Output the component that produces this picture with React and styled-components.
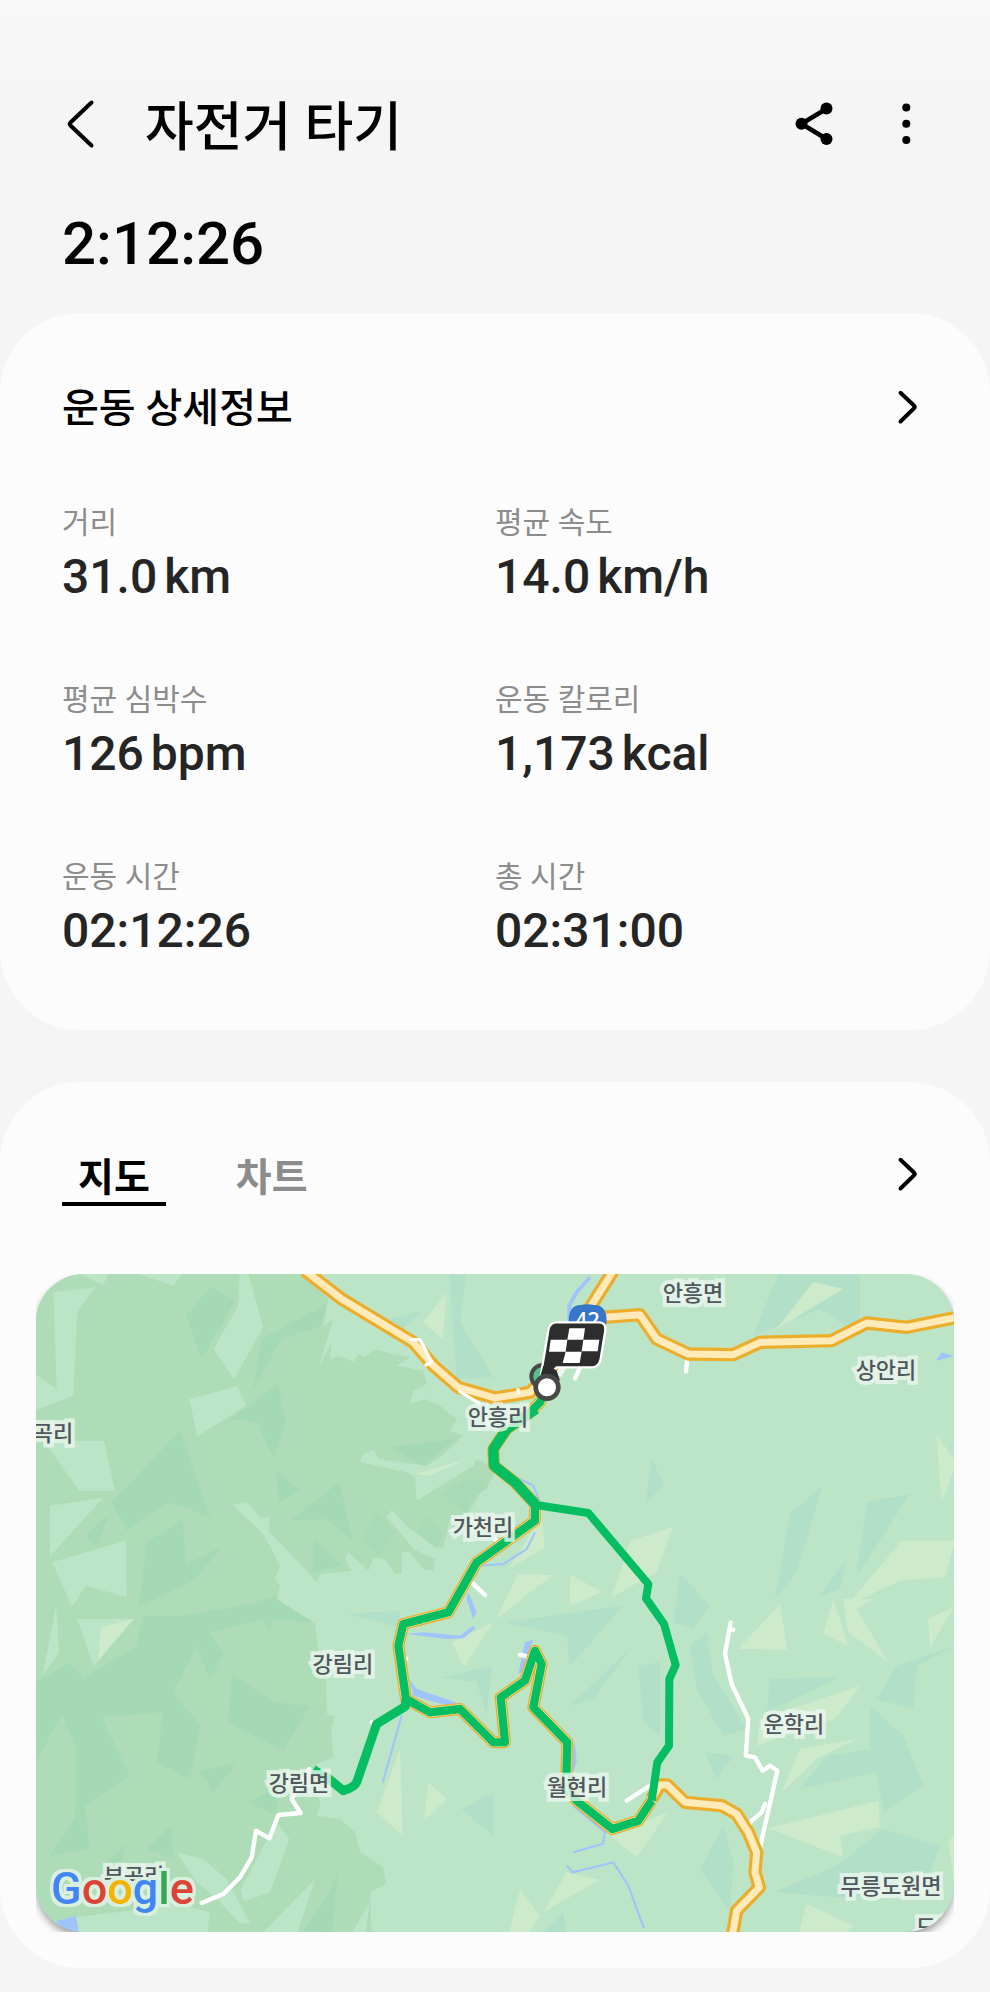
import React, { useState } from 'react';
import styled, { createGlobalStyle } from 'styled-components';

const GlobalStyle = createGlobalStyle`
  * { box-sizing: border-box; }
  body {
    margin: 0;
    background: #f5f5f5;
    color: #000;
    font-family: Roboto, "Noto Sans CJK KR", sans-serif;
  }
  button {
    margin: 0;
    padding: 0;
    border: 0;
    background: none;
    color: inherit;
    font: inherit;
    cursor: pointer;
  }
`;

const Page = styled.div`
  min-height: 100vh;
  padding: 92px 0 24px;
  background: linear-gradient(#f8f8f8, #f5f5f5 120px);
`;

const Header = styled.header`
  display: flex;
  align-items: center;
  height: 64px;
  padding: 0 60px 0 58px;
`;

const Title = styled.h1`
  flex: 1;
  margin: 0 0 0 39px;
  padding-top: 8px;
  font-size: 53px;
  line-height: 64px;
  font-weight: 500;
`;

const HeaderActions = styled.div`
  display: flex;
  gap: 44px;
`;

const IconButton = styled.button`
  display: flex;
  align-items: center;
  justify-content: center;
  width: 48px;
  height: 56px;
  flex: none;
`;

const Duration = styled.p`
  margin: 52px 62px 33px;
  font-size: 60px;
  line-height: 72px;
  font-weight: 500;
`;

const Cards = styled.main`
  display: flex;
  flex-direction: column;
  gap: 52px;
`;

const Card = styled.section`
  border-radius: 80px;
  background: #fcfcfc;
  padding: ${(p) => (p.$media ? '64px 36px 36px' : '68px 0 71px')};
`;

const CardHeader = styled.div`
  display: flex;
  align-items: center;
  justify-content: space-between;
  padding: ${(p) => (p.$media ? '0 24px 0 26px' : '0 60px 0 62px')};
`;

const CardTitle = styled.h2`
  margin: 0;
  font-size: 40px;
  line-height: 56px;
  font-weight: 500;
`;

const Stats = styled.dl`
  display: grid;
  grid-template-columns: 1fr 1fr;
  row-gap: 73px;
  margin: 64px 62px 0;
`;

const StatLabel = styled.dt`
  color: #8c8c8c;
  font-size: 30px;
  line-height: 44px;
`;

const StatValue = styled.dd`
  display: flex;
  gap: 7px;
  margin: 4px 0 0;
  color: #252525;
  font-size: 48px;
  line-height: 56px;
  font-weight: 500;
`;

const Tabs = styled.div`
  display: flex;
  gap: 54px;
`;

const Tab = styled.button`
  padding: 8px 16px 0;
  border-bottom: 4px solid ${(p) => (p.$active ? '#000' : 'transparent')};
  color: ${(p) => (p.$active ? '#000' : '#8c8c8c')};
  font-size: 39px;
  line-height: 48px;
  font-weight: 700;
`;

const MapFrame = styled.div`
  margin-top: 68px;
  overflow: hidden;
`;

const MapCanvas = styled.div`
  position: relative;
  aspect-ratio: 918 / 658;
  overflow: hidden;
  border-radius: 48px;
  background: #bce4c7;
  box-shadow: 0 5px 8px -1px rgba(0, 0, 0, 0.4);
`;

const MapDrawing = styled.svg`
  display: block;
  width: 100%;
  height: 100%;
`;

const PlaceName = styled.span`
  position: absolute;
  left: ${(p) => (p.$x / 918) * 100}%;
  top: ${(p) => (p.$y / 658) * 100}%;
  transform: translate(-50%, -50%);
  color: #50565a;
  font-size: 22px;
  line-height: 28px;
  font-weight: 500;
  white-space: nowrap;
  -webkit-text-stroke: 8px rgba(235, 247, 239, 0.8);
  paint-order: stroke fill;
`;

const MapBrand = styled.a`
  position: absolute;
  left: 15px;
  bottom: 15px;
  font-family: Roboto, sans-serif;
  font-size: 45px;
  line-height: 56px;
  font-weight: 500;
  text-decoration: none;
  filter: drop-shadow(3px 0 0 #d9efdf) drop-shadow(-3px 0 0 #d9efdf)
    drop-shadow(0 3px 0 #d9efdf) drop-shadow(0 -3px 0 #d9efdf);
`;

const BrandLetter = styled.span`
  color: ${(p) => p.$color};
`;

const stats = [
  ['거리', '31.0', 'km'],
  ['평균 속도', '14.0', 'km/h'],
  ['평균 심박수', '126', 'bpm'],
  ['운동 칼로리', '1,173', 'kcal'],
  ['운동 시간', '02:12:26'],
  ['총 시간', '02:31:00'],
];

const places = [
  ['안흥면', 657, 20],
  ['상안리', 850, 97],
  ['안흥리', 462, 144],
  ['곡리', 17, 160],
  ['가천리', 447, 254],
  ['강림리', 307, 391],
  ['운학리', 758, 451],
  ['강림면', 263, 510],
  ['월현리', 541, 514],
  ['부곡리', 98, 603],
  ['무릉도원면', 855, 613],
  ['도원리', 910, 654],
];

const brand = [
  ['G', '#4285f4'],
  ['o', '#db4437'],
  ['o', '#f4b400'],
  ['g', '#4285f4'],
  ['l', '#3aa757'],
  ['e', '#db4437'],
];

function BackIcon() {
  return (
    <svg width="48" height="56" viewBox="0 0 48 56" fill="none" stroke="#000" strokeWidth="4" strokeLinecap="round" strokeLinejoin="round" aria-hidden="true">
      <path d="M33.500 6.500 L12.500 26.500 Q11 28 12.500 29.500 L33.500 49.500" />
    </svg>
  );
}

function ShareIcon() {
  return (
    <svg width="48" height="56" viewBox="0 0 48 56" stroke="#000" aria-hidden="true">
      <path d="M36.500 12.700 L11.500 27.800 L36.500 43" fill="none" strokeWidth="4.600" />
      <g stroke="none">
        <circle cx="11.500" cy="27.800" r="6" />
        <circle cx="36.500" cy="12.600" r="6" />
        <circle cx="36.500" cy="43" r="6" />
      </g>
    </svg>
  );
}

function MoreIcon() {
  return (
    <svg width="48" height="56" viewBox="0 0 48 56" aria-hidden="true">
      <circle cx="24.300" cy="11.500" r="4" />
      <circle cx="24.300" cy="27.700" r="4" />
      <circle cx="24.300" cy="44" r="4" />
    </svg>
  );
}

function ChevronIcon() {
  return (
    <svg width="48" height="56" viewBox="0 0 48 56" fill="none" stroke="#000" strokeWidth="4" strokeLinecap="round" strokeLinejoin="round" aria-hidden="true">
      <path d="M18.500 11.800 L32.200 24.800 Q33.400 26 32.200 27.200 L18.500 40.500" />
    </svg>
  );
}

const northLoop =
  'M1550 355 L1530 400 L1500 430 L1430 480 L1390 540 L1392 590 L1455 640 L1515 705 L1515 755 L1340 880 L1255 1030 L1120 1065 L1105 1130 L1128 1290 L1200 1330 L1290 1320 L1390 1420 L1425 1420 L1412 1285 L1485 1235 L1515 1145 L1535 1185 L1510 1315 L1612 1420 L1608 1560 L1640 1595 L1747 1680 L1825 1655 L1865 1595';
const eastLoop =
  'M1865 1595 L1882 1480 L1917 1430 L1918 1230 L1937 1188 L1902 1065 L1848 988 L1855 945 L1675 732 L1518 708';
const spur = 'M1128 1290 L1126 1312 L1040 1365 L980 1540 Q972 1556 940 1565 L900 1532 L850 1502';
const highways = [
  'M825 5 L935 90 L1150 220 L1210 290 L1285 355 L1395 387 L1500 370 L1550 320 L1690 100 L1750 5',
  'M1650 150 L1830 137 L1880 210 L1975 255 L2110 257 L2190 220 L2405 215 L2510 162 L2630 175 L2790 143',
  'M1865 1590 L1890 1548 L1912 1548 L1965 1600 L2075 1610 L2120 1635 L2155 1690 L2180 1750 L2175 1810 L2188 1855 L2120 1925 L2105 2010',
];

function Terrain() {
  return (
    <g>
      <path
        fill="#addcb6"
        d="M0 0 H820 L895 90 L880 170 L910 150 L865 298 L905 220 L900 270 L925 262 L970 278 L985 255 L1005 265 L1035 240 L1085 255 L1140 265 L1100 290 L1180 305 L1190 345 L1150 365 L1140 405 L1185 390 L1230 410 L1282 452 L1258 485 L1300 500 L1235 560 L1190 590 L1045 570 L1030 540 L1000 555 L990 580 L1130 610 L1155 625 L1160 695 L1330 590 L1340 570 L1400 600 L1370 660 L1320 690 L1310 740 L1260 750 L1240 835 L1220 835 L1140 780 L1085 722 L1070 745 L1110 790 L1150 840 L1215 870 L1210 905 L1180 900 L1140 850 L1115 850 L1115 915 L1095 915 L1065 870 L1030 865 L1015 905 L955 850 L945 870 L965 905 L870 915 L860 940 L825 900 L715 785 L720 740 L695 750 L650 698 L608 708 L700 795 L750 890 L735 930 L750 950 L740 990 L800 1030 L855 1065 L865 1145 L888 1180 L890 1335 L915 1342 L903 1380 L910 1465 L860 1485 L855 1560 L872 1600 L860 1640 L930 1650 L975 1690 L990 1750 L1060 1795 L1068 1845 L1020 1870 L1025 2010 H0 Z"
      />
      <g fill="#bce4c7">
        <path d="M70 70 L195 55 L142 130 L130 380 L18 422 L18 315 L80 362 Z M148 15 H235 L220 48 Z M325 15 H455 L430 50 Z M628 15 H655 L700 175 L612 330 L550 240 L625 110 Z M478 390 L622 352 L648 410 L502 502 Z M40 515 L222 515 L255 665 H148 Z M60 710 L220 686 L60 862 Z M66 880 L288 815 L290 985 L168 950 L125 1010 Z" />
        <path d="M78 1010 L88 1150 L38 1218 Z M142 1050 H312 L190 1192 Z M112 990 H145 L125 1012 Z M740 1660 L778 1710 L720 1870 L640 1898 L632 1860 Z M855 1830 L800 2000 L700 1990 Z M1020 1900 L1005 2000 H960 Z M440 1750 L520 1770 L590 1830 L630 1905 L660 1962 L630 1965 L570 1900 L500 1840 Z M130 1945 L300 1925 L420 1900 L540 1930 L530 2010 H100 Z" />
      </g>
      <g fill="#a5d9b5">
        <path d="M545 52 L615 95 L515 270 L468 140 Z M745 345 L768 465 L730 570 L680 460 L600 450 Z M695 210 L890 105 L870 175 L755 208 L665 370 Z M450 485 L540 745 L420 700 L290 785 L245 700 Z M740 605 L810 665 L745 702 Z M928 640 L970 820 L890 750 L785 752 Z M850 810 L935 890 L848 910 Z M1080 535 L1275 510 L1180 590 Z M240 735 L200 830 L165 800 Z M458 750 L470 885 L580 830 L490 935 L325 1015 L350 820 Z" />
        <path d="M18 1240 L120 1180 L160 1230 L320 1130 L340 1040 L460 1040 L740 990 L850 1060 L700 1050 L540 1090 L580 1155 L540 1235 L500 1130 L430 1270 L510 1370 L480 1530 L380 1480 L400 1330 L215 1345 L300 1520 L165 1610 L180 1740 L60 1760 L135 1650 L140 1440 L95 1335 L18 1480 Z M605 1215 L730 1300 L840 1310 L760 1445 L595 1360 Z M510 1505 L620 1480 L550 1572 Z M425 1668 L430 1770 L350 1740 Z M740 1555 L740 1640 L650 1600 Z M925 1800 L905 2000 H810 L900 1870 Z M680 1000 L740 980 L720 1100 Z M290 1725 L270 1790 H215 Z" />
        <path d="M1300 630 L1370 640 L1310 740 L1240 680 Z M1040 725 L1090 790 L1050 860 L995 820 Z M1190 740 L1240 790 L1220 840 L1160 790 Z" opacity="0.7" />
      </g>
      <g fill="#b1dfc8">
        <path d="M1258 15 H1310 L1290 160 L1390 325 L1280 330 Z M1175 125 L1110 190 L1040 160 Z M2245 15 H2490 V200 L2370 120 L2170 200 Z M1865 565 L1900 650 L1848 700 Z M2378 650 L2300 910 L2235 990 L2280 735 Z M2510 700 L2640 675 L2480 920 Z M2450 870 L2430 960 L2370 980 Z M1950 915 L2040 1010 L1990 1080 L1930 1060 Z" />
        <path d="M1420 1060 L1780 1010 L1620 1190 L1610 1100 Z M1825 1190 L1890 1180 V1400 L1840 1360 Z M1980 1130 L2030 1090 L2050 1220 L2150 1380 L2080 1400 L2000 1260 Z M2220 1230 L2430 1225 L2210 1330 Z M2780 1130 L2660 1190 L2650 1320 L2540 1290 L2600 1190 Z M2520 1310 L2620 1400 L2680 1550 L2560 1630 L2540 1510 L2310 1560 L2390 1460 L2520 1440 Z M2080 1670 L2110 1780 L2100 1930 L2010 1800 Z M2560 1680 L2730 1730 L2700 1810 L2500 1890 L2230 1870 L2420 1790 Z M2025 1450 L2110 1460 L2060 1530 Z M1385 1190 L1370 1340 L1340 1240 L1235 1225 Z M1390 1570 L1390 1700 L1295 1620 Z M1800 1140 L1620 1310 L1690 1290 Z M1600 1930 L1610 2000 H1530 Z M950 1035 L1110 1025 L1105 1075 Z" />
      </g>
      <g fill="#cdeacb">
        <path d="M1250 70 L1238 210 L1178 160 Z M2350 38 L2440 60 L2240 180 Z M2718 495 L2780 580 L2735 700 Z M1928 775 L1880 910 L1745 985 L1800 815 Z M2615 815 H2775 L2745 925 L2610 935 L2450 1010 Z M1620 915 L1715 970 L1620 1010 Z M1465 915 L1570 918 L1400 1045 Z M1535 740 L1545 835 L1435 900 Z M1155 615 L1310 570 L1200 620 Z" />
        <path d="M2250 1005 L2272 1142 L2125 1140 Z M2410 990 L2455 1130 L2380 1095 Z M2440 990 H2530 L2480 1020 L2575 1180 L2455 1090 Z M2775 1010 L2700 1135 L2695 1050 Z M2490 1250 L2415 1350 L2180 1430 L2190 1350 Z M2480 1410 L2360 1470 L2255 1570 L2310 1440 Z M2545 1595 L2550 1675 L2430 1700 L2440 1765 L2215 1678 Z M1915 1628 L1820 1765 L1740 1700 Z M1470 1862 L1530 1940 L1490 2000 H1435 Z M1610 1810 L1708 1832 L1540 1930 Z M2330 1905 L2470 1970 L2440 2000 H2305 Z M2755 1720 L2775 1690 V1860 Z M1390 1060 L1302 1195 L1265 1120 Z M1110 1440 L1118 1700 L1040 1630 Z M1195 1540 L1250 1590 L1182 1655 Z M310 1050 L205 1175 L212 1075 Z M1430 990 H1480 L1400 1050 Z" />
      </g>
      <g fill="#9fc3fb">
        <path d="M1130 1095 L1180 1090 L1290 1100 L1330 1070 L1335 1080 L1300 1108 L1250 1110 Z M1315 970 L1340 1030 L1330 1050 L1310 990 Z M1138 1230 L1160 1260 L1290 1305 L1270 1315 L1150 1280 Z M80 1955 L138 1942 L148 2000 H100 Z M2718 275 L2735 250 L2772 262 Z M1635 1420 L1640 1480 L1625 1520 L1612 1500 Z M1485 1120 L1510 1112 L1500 1135 L1475 1210 L1465 1215 Z" />
      </g>
      <g fill="none" stroke="#9fc3fb" strokeWidth="6">
        <path d="M1680 25 L1640 70 L1618 110 V160" strokeWidth="11" />
        <path d="M1115 1340 L1058 1540 M1470 630 L1510 650 L1530 700 M1515 790 L1490 840 L1420 885 L1340 890 M1630 1610 L1725 1690 L1718 1725 L1630 1750 M1610 1790 L1628 1810 L1750 1780 L1795 1850 L1842 1978" />
      </g>
    </g>
  );
}

function RouteMap() {
  return (
    <MapDrawing viewBox="18 15 2754 1974" preserveAspectRatio="xMidYMid slice" role="img" aria-label="자전거 경로 지도">
      <Terrain />
      <g fill="none" strokeLinejoin="round">
        <g stroke="#fff" strokeWidth="13" strokeLinecap="round">
          <path d="M515 1902 L580 1875 L630 1825 L665 1765 L678 1685 L718 1708 L745 1638 L812 1632 L785 1590 L838 1500" />
          <path d="M2102 1060 L2085 1155 L2105 1245 L2155 1350 L2147 1460 L2175 1465 L2198 1505 L2220 1490 L2242 1505 L2180 1780 M2205 1605 L2195 1630 L2162 1658 L2150 1690 M2104 1082 H2110" />
          <path d="M1790 1595 L1860 1550 M1972 265 L1968 308 M1635 328 L1655 285 M1325 940 L1365 978 M1470 1157 L1500 1165 M1025 1360 H1026 M1128 1170 H1129 M1395 810 L1405 825" />
        </g>
        <g strokeLinecap="butt">
          {highways.map((d) => (
            <path key={d} d={d} stroke="#ecae2a" strokeWidth="40" />
          ))}
          {highways.map((d) => (
            <path key={d} d={d} stroke="#ffeab9" strokeWidth="21" />
          ))}
        </g>
        <path d="M1145 212 L1170 212 L1205 280 L1188 288 M1290 368 L1350 405 M1464 362 L1466 372" stroke="#fff" strokeWidth="10" strokeLinecap="round" />
        <path d={northLoop} stroke="#ecae2a" strokeWidth="36" />
        <path d={northLoop} stroke="#ffeab9" strokeWidth="28" />
        <path d={northLoop} stroke="#06be62" strokeWidth="25" />
        <path d="M1518 420 L1430 480 L1390 540 L1392 590 L1455 640 L1515 705" stroke="#06be62" strokeWidth="31" />
        <path d={eastLoop} stroke="#06be62" strokeWidth="24" />
        <path d={spur} stroke="#06be62" strokeWidth="27" />
      </g>
      <g>
        <path d="M1616 156 Q1616 108 1652 108 Q1672 103 1693 108 Q1730 108 1730 156 Q1725 200 1672 210 Q1620 200 1616 156 Z" fill="#3876c9" />
        <text x="1672" y="176" fill="#fff" fontSize="66" fontWeight="500" textAnchor="middle" fontFamily="Noto Sans, sans-serif">42</text>
        <path d="M1585 320 L1602 290" stroke="#eef7ee" strokeWidth="20" />
        <circle cx="1538" cy="322" r="34" fill="#57c08d" stroke="#484848" strokeWidth="12" />
        <path
          d="M1578 160 H1708 Q1728 161 1726 184 L1712 270 Q1707 295 1686 295 H1580 L1545 328 Q1532 334 1533 316 L1555 184 Q1558 161 1578 160 Z"
          fill="#2d2d2d"
          stroke="#fff"
          strokeWidth="7"
        />
        <path d="M1560 290 L1580 305 L1590 335 L1530 325 L1540 290 Z" fill="#2d2d2d" />
        <g fill="#fff">
          <path d="M1618 178 H1665 L1660 212 H1612 Z M1562 212 H1612 L1607 248 H1557 Z M1660 212 H1708 L1703 247 H1655 Z M1607 248 H1655 L1649 282 H1598 Z" />
        </g>
        <circle cx="1551" cy="355" r="34" fill="#fff" stroke="#484848" strokeWidth="14" />
      </g>
    </MapDrawing>
  );
}

export default function App() {
  const [tab, setTab] = useState('지도');
  return (
    <Page>
      <GlobalStyle />
      <Header>
        <IconButton aria-label="뒤로"><BackIcon /></IconButton>
        <Title>자전거 타기</Title>
        <HeaderActions>
          <IconButton aria-label="공유"><ShareIcon /></IconButton>
          <IconButton aria-label="더보기"><MoreIcon /></IconButton>
        </HeaderActions>
      </Header>
      <Duration>2:12:26</Duration>
      <Cards>
        <Card>
          <CardHeader>
            <CardTitle>운동 상세정보</CardTitle>
            <IconButton aria-label="운동 상세정보 열기"><ChevronIcon /></IconButton>
          </CardHeader>
          <Stats>
            {stats.map(([label, value, unit]) => (
              <div key={label}>
                <StatLabel>{label}</StatLabel>
                <StatValue>
                  <span>{value}</span>
                  {unit && <span>{unit}</span>}
                </StatValue>
              </div>
            ))}
          </Stats>
        </Card>
        <Card $media>
          <CardHeader $media>
            <Tabs role="tablist">
              {['지도', '차트'].map((name) => (
                <Tab key={name} role="tab" aria-selected={tab === name} $active={tab === name} onClick={() => setTab(name)}>
                  {name}
                </Tab>
              ))}
            </Tabs>
            <IconButton aria-label="지도 열기"><ChevronIcon /></IconButton>
          </CardHeader>
          <MapFrame>
            <MapCanvas>
              <RouteMap />
              {places.map(([name, x, y]) => (
                <PlaceName key={name} $x={x} $y={y}>{name}</PlaceName>
              ))}
              <MapBrand href="#google" aria-label="Google">
                {brand.map(([letter, color], i) => (
                  <BrandLetter key={i} $color={color}>{letter}</BrandLetter>
                ))}
              </MapBrand>
            </MapCanvas>
          </MapFrame>
        </Card>
      </Cards>
    </Page>
  );
}
